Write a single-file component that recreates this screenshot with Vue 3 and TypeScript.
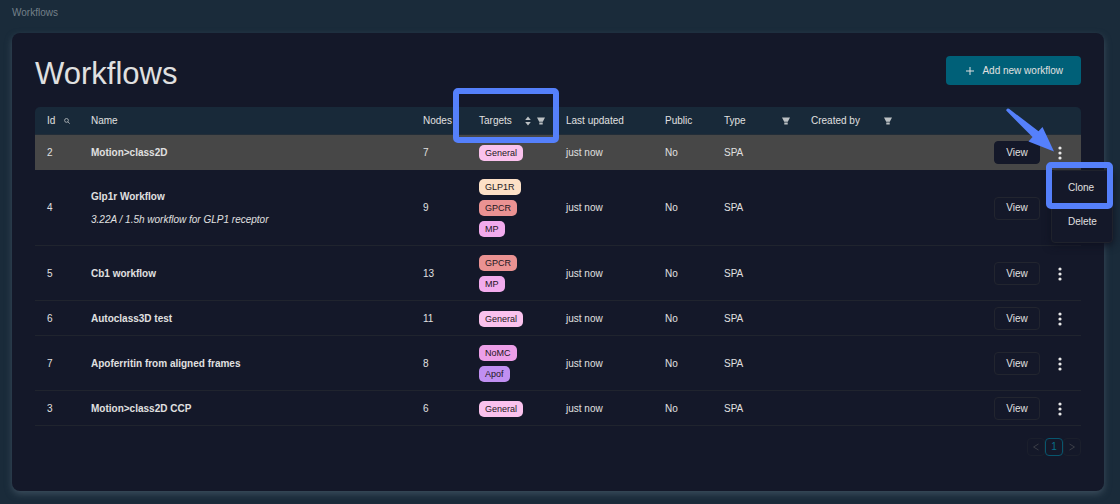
<script setup lang="ts">
import { ref } from 'vue'

interface Tag { label: string; tone: string }
interface Workflow { id: number; name: string; note?: string; nodes: number; tags: Tag[] }

const general: Tag = { label: 'General', tone: 'pink' }
const gpcr: Tag = { label: 'GPCR', tone: 'coral' }
const mp: Tag = { label: 'MP', tone: 'orchid' }

const workflows: Workflow[] = [
  { id: 2, name: 'Motion>class2D', nodes: 7, tags: [general] },
  { id: 4, name: 'Glp1r Workflow', note: '3.22A / 1.5h workflow for GLP1 receptor', nodes: 9, tags: [{ label: 'GLP1R', tone: 'peach' }, gpcr, mp] },
  { id: 5, name: 'Cb1 workflow', nodes: 13, tags: [gpcr, mp] },
  { id: 6, name: 'Autoclass3D test', nodes: 11, tags: [general] },
  { id: 7, name: 'Apoferritin from aligned frames', nodes: 8, tags: [{ label: 'NoMC', tone: 'violet' }, { label: 'Apof', tone: 'purple' }] },
  { id: 3, name: 'Motion>class2D CCP', nodes: 6, tags: [general] },
]

const openMenu = ref<number | null>(2)
function toggleMenu(id: number) {
  openMenu.value = openMenu.value === id ? null : id
}
</script>

<template>
  <div class="page">
    <nav class="crumbs" aria-label="Breadcrumb"><a href="#">Workflows</a></nav>
    <main class="card">
      <header class="top">
        <h1>Workflows</h1>
        <button class="add" type="button">
          <svg width="8" height="8" viewBox="0 0 8 8" aria-hidden="true"><path d="M4 0v8M0 4h8" stroke="currentColor" /></svg>
          <span>Add new workflow</span>
        </button>
      </header>

      <table>
        <colgroup>
          <col class="c-id"><col class="c-name"><col class="c-nodes"><col class="c-targets"><col class="c-updated">
          <col class="c-public"><col class="c-type"><col class="c-created"><col class="c-actions">
        </colgroup>
        <thead>
          <tr>
            <th>
              <div class="head">Id
                <button class="icon" type="button" aria-label="Search id">
                  <svg width="6" height="6" viewBox="0 0 12 12" aria-hidden="true"><g fill="none" stroke="currentColor" stroke-width="1.6"><circle cx="5" cy="4.8" r="3.8" /><path d="M7.8 7.6l3.6 3.8" /></g></svg>
                </button>
              </div>
            </th>
            <th>Name</th>
            <th>Nodes</th>
            <th class="targets">
              <div class="head">Targets
                <span class="tools">
                  <button class="icon" type="button" aria-label="Sort targets">
                    <svg width="6" height="10" viewBox="0 0 6 10" aria-hidden="true"><path fill="currentColor" d="M3 0.5L5.8 4H0.2zM3 9.5L0.2 6h5.6z" /></svg>
                  </button>
                  <button class="icon" type="button" aria-label="Filter targets">
                    <svg width="8" height="8" viewBox="0 0 8 8" aria-hidden="true"><path fill="currentColor" d="M0 .5h8L5.8 4.7H2.2zM2.3 5.4h3.4v2.1H2.3z" /></svg>
                  </button>
                </span>
              </div>
              <span class="mark mark-targets" />
            </th>
            <th>Last updated</th>
            <th>Public</th>
            <th>
              <div class="head">Type
                <button class="icon" type="button" aria-label="Filter type">
                  <svg width="8" height="8" viewBox="0 0 8 8" aria-hidden="true"><path fill="currentColor" d="M0 .5h8L5.8 4.7H2.2zM2.3 5.4h3.4v2.1H2.3z" /></svg>
                </button>
              </div>
            </th>
            <th>
              <div class="head">Created by
                <button class="icon" type="button" aria-label="Filter created by">
                  <svg width="8" height="8" viewBox="0 0 8 8" aria-hidden="true"><path fill="currentColor" d="M0 .5h8L5.8 4.7H2.2zM2.3 5.4h3.4v2.1H2.3z" /></svg>
                </button>
              </div>
            </th>
            <th />
          </tr>
        </thead>
        <tbody>
          <tr v-for="w in workflows" :key="w.id" :class="{ active: openMenu === w.id }">
            <td>{{ w.id }}</td>
            <td>
              <div class="title"><strong>{{ w.name }}</strong><em v-if="w.note">{{ w.note }}</em></div>
            </td>
            <td>{{ w.nodes }}</td>
            <td>
              <div class="tags"><span v-for="t in w.tags" :key="t.label" class="tag" :class="t.tone">{{ t.label }}</span></div>
            </td>
            <td>just now</td>
            <td>No</td>
            <td>SPA</td>
            <td />
            <td class="actions">
              <div class="buttons">
                <button class="view" type="button">View</button>
                <button class="more" type="button" aria-label="More actions" @click="toggleMenu(w.id)">
                  <svg width="4" height="14" viewBox="0 0 4 14" aria-hidden="true"><g fill="currentColor"><circle cx="2" cy="2" r="1.6" /><circle cx="2" cy="7" r="1.6" /><circle cx="2" cy="12" r="1.6" /></g></svg>
                </button>
              </div>
              <template v-if="openMenu === w.id">
                <div class="menu">
                  <button type="button">Clone</button>
                  <button type="button">Delete</button>
                  <span class="mark mark-clone" />
                </div>
                <svg class="arrow" width="50" height="46" viewBox="0 0 50 46" aria-hidden="true"><path fill="#5580fb" d="M1.2 2.6Q1.4 0 4 .8L33.5 23.2L37.5 19L49 43.5L23.5 33.5L27.5 29z" /></svg>
              </template>
            </td>
          </tr>
        </tbody>
      </table>

      <nav class="pager" aria-label="Pages">
        <button type="button" disabled aria-label="Previous page"><svg width="6" height="8" viewBox="0 0 6 8" aria-hidden="true"><path d="M5.5 1L.5 4l5 3" fill="none" stroke="currentColor" /></svg></button>
        <button class="current" type="button">1</button>
        <button type="button" disabled aria-label="Next page"><svg width="6" height="8" viewBox="0 0 6 8" aria-hidden="true"><path d="M.5 1l5 3-5 3" fill="none" stroke="currentColor" /></svg></button>
      </nav>
    </main>
  </div>
</template>

<style>
body { margin: 0; background: #1a2b3a; }
</style>

<style scoped>
.page {
  box-sizing: border-box;
  min-height: 100vh;
  padding: 5px 16px 13px 12px;
  display: flex;
  flex-direction: column;
  gap: 12px;
  overflow: hidden;
  font: 10px/16px "Liberation Sans", Arial, sans-serif;
  color: #e0e0e0;
}
button { font: inherit; color: inherit; margin: 0; padding: 0; border: 0; background: none; cursor: pointer; }
svg { display: block; }
.crumbs a { color: #748089; text-decoration: none; }
.card {
  flex: 1;
  padding: 23px;
  background: #141829;
  border-radius: 8px;
  box-shadow: 0 3px 7px #3b4d5c;
}
.top { display: flex; justify-content: space-between; align-items: flex-start; height: 51px; }
h1 { margin: 0; font-size: 31px; line-height: 35px; font-weight: 400; }
.add {
  display: flex;
  align-items: center;
  gap: 8px;
  height: 29px;
  padding: 0 18px 0 20px;
  border-radius: 4px;
  background: #006078;
}
table { width: 100%; table-layout: fixed; border-collapse: separate; border-spacing: 0; }
.c-id { width: 44px; }
.c-nodes { width: 56px; }
.c-targets { width: 87px; }
.c-updated { width: 99px; }
.c-public { width: 59px; }
.c-type { width: 87px; }
.c-created { width: 102px; }
.c-actions { width: 180px; }
th {
  position: relative;
  box-sizing: border-box;
  height: 28px;
  padding: 0 0 0 12px;
  background: #182939;
  border-bottom: 1px solid #222d38;
  text-align: left;
  font-weight: 400;
}
th:first-child { border-top-left-radius: 5px; }
th:last-child { border-top-right-radius: 5px; }
.head { display: flex; align-items: center; justify-content: space-between; padding-right: 9px; }
.tools { display: flex; align-items: center; gap: 6px; }
.icon { color: #bcc1c4; }
td { padding: 9px 0 8px 12px; border-bottom: 1px solid #20242e; line-height: 16px; }
.active td { background: #474747; border-color: #474747; }
.title { display: flex; flex-direction: column; gap: 7px; }
.tags { display: flex; flex-direction: column; align-items: flex-start; gap: 5px; }
.tag { padding: 0 6px; border-radius: 5px; font-size: 9px; line-height: 16px; color: #1b1620; }
.pink { background: #fac2ed; }
.coral { background: #ea9292; }
.orchid { background: #f2abed; }
.peach { background: #fce0c6; }
.violet { background: #ec9fe8; }
.purple { background: #c08ff2; }
.actions { position: relative; padding: 6px 19px 5px 0; }
.buttons { display: flex; justify-content: flex-end; align-items: center; gap: 18px; }
.view {
  box-sizing: border-box;
  width: 46px;
  height: 23px;
  border: 1px solid #22252f;
  border-radius: 4px;
  background: #141829;
}
.active .view { border-color: #141829; }
.more { color: #e8e8e8; }
.menu {
  position: absolute;
  z-index: 1;
  top: 35px;
  right: -32px;
  box-sizing: border-box;
  width: 62px;
  padding-bottom: 3px;
  border: 1px solid #1f222c;
  border-radius: 4px;
  background: #141829;
  box-shadow: 0 2px 8px #0e1120;
}
.menu button { display: block; width: 100%; height: 34px; padding-left: 16px; text-align: left; }
.mark { position: absolute; box-sizing: border-box; border: 6px solid #5580fb; border-radius: 5px; pointer-events: none; }
.mark-targets { z-index: 2; top: -19px; left: -14px; width: 106px; height: 55px; }
.mark-clone { top: -9px; right: -1px; width: 67px; height: 47px; }
.arrow { position: absolute; z-index: 2; top: -27px; right: 26px; }
.pager { display: flex; justify-content: flex-end; margin-top: 12px; }
.pager button {
  display: flex;
  align-items: center;
  justify-content: center;
  box-sizing: border-box;
  width: 18px;
  height: 18px;
  border: 1px solid #1b1f2c;
  border-radius: 4px;
  color: #3a3d46;
}
.pager .current { border-color: #08566e; color: #08708a; }
</style>
